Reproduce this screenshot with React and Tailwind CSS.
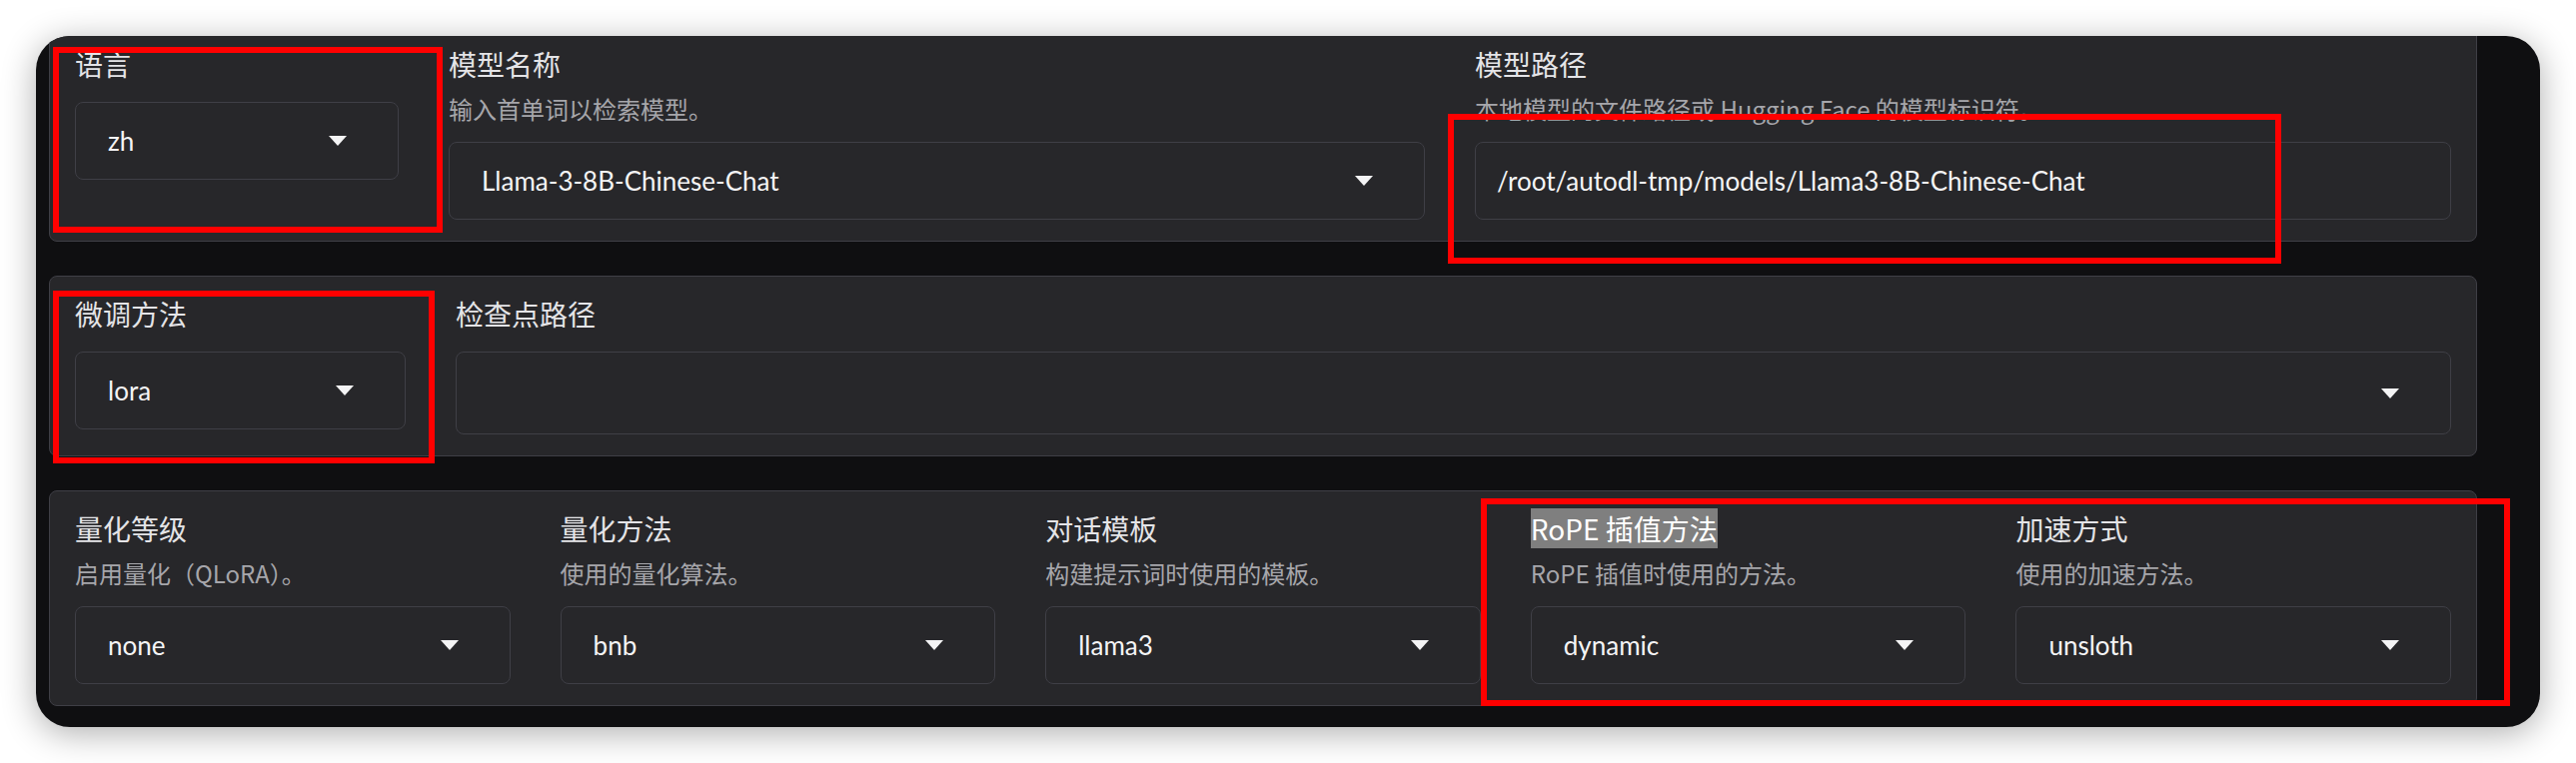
import React from "react";

function Arrow() {
  return (
    <svg width="18" height="10" viewBox="0 0 18 10" className="shrink-0">
      <path d="M0 0 H18 L9 10 Z" fill="#f4f4f5" />
    </svg>
  );
}

const valueFont = { fontFamily: 'Lato, "Noto Sans CJK SC", sans-serif' };

function Select({ value, tall = false }) {
  return (
    <div
      className={
        "flex items-center justify-between rounded-[8px] border border-[#3f3f46] bg-[#27272a] pl-[32px] pr-[51px] " +
        (tall ? "h-[83px]" : "h-[78px]")
      }
    >
      <span className="text-[26px] leading-[36px] text-[#f4f4f5] whitespace-nowrap" style={valueFont}>
        {value}
      </span>
      <Arrow />
    </div>
  );
}

function TextBox({ value }) {
  return (
    <div className="flex h-[78px] items-center rounded-[8px] border border-[#3f3f46] bg-[#27272a] px-[21px]">
      <span className="text-[26px] leading-[36px] text-[#f4f4f5] whitespace-nowrap" style={valueFont}>
        {value}
      </span>
    </div>
  );
}

function Field({ label, info, children, highlight = false }) {
  return (
    <div className="flex min-w-0 flex-col">
      <div className="text-[28px] leading-[33px] text-[#e4e4e7] whitespace-nowrap">
        {highlight ? <span className="bg-[#7f7f7f] text-white">{label}</span> : label}
      </div>
      {info ? (
        <div className="mt-[12px] text-[24px] leading-[32px] text-[#a6a6ab] whitespace-nowrap">{info}</div>
      ) : null}
      <div className={info ? "mt-[17px]" : "mt-[21px]"}>{children}</div>
    </div>
  );
}

function Panel({ children }) {
  return (
    <div className="rounded-[8px] border border-[#3f3f46] bg-[#27272a] px-[25px] pt-[21px] pb-[21px]">
      {children}
    </div>
  );
}

function RedBox({ className }) {
  return <div className={"pointer-events-none absolute border-[6px] border-[#ff0000] " + className} />;
}

export default function App() {
  return (
    <div
      className="relative h-[764px] w-[2578px] overflow-hidden bg-white pt-[36px]"
      style={{ fontFamily: '"Noto Sans CJK SC", "Noto Sans", sans-serif' }}
    >
      <div className="ml-[36px] flex h-[692px] w-[2506px] flex-col gap-[34px] overflow-hidden rounded-[34px] bg-[#0f0f11] pl-[13px] pr-[63px] shadow-[0_6px_34px_rgba(0,0,0,0.32)]">
        <div className="-mt-[10px]">
          <Panel>
            <div className="flex items-start gap-[50px]">
              <div className="w-[324px] shrink-0">
                <Field label="语言">
                  <Select value="zh" />
                </Field>
              </div>
              <div className="min-w-0 flex-1">
                <Field label="模型名称" info="输入首单词以检索模型。">
                  <Select value="Llama-3-8B-Chinese-Chat" />
                </Field>
              </div>
              <div className="min-w-0 flex-1">
                <Field label="模型路径" info="本地模型的文件路径或 Hugging Face 的模型标识符。">
                  <TextBox value="/root/autodl-tmp/models/Llama3-8B-Chinese-Chat" />
                </Field>
              </div>
            </div>
          </Panel>
        </div>

        <Panel>
          <div className="flex items-start gap-[50px]">
            <div className="w-[331px] shrink-0">
              <Field label="微调方法">
                <Select value="lora" />
              </Field>
            </div>
            <div className="min-w-0 flex-1">
              <Field label="检查点路径">
                <Select value="" tall />
              </Field>
            </div>
          </div>
        </Panel>

        <Panel>
          <div className="grid grid-cols-5 gap-x-[50px]">
            <Field label="量化等级" info="启用量化（QLoRA）。">
              <Select value="none" />
            </Field>
            <Field label="量化方法" info="使用的量化算法。">
              <Select value="bnb" />
            </Field>
            <Field label="对话模板" info="构建提示词时使用的模板。">
              <Select value="llama3" />
            </Field>
            <Field label="RoPE 插值方法" info="RoPE 插值时使用的方法。" highlight>
              <Select value="dynamic" />
            </Field>
            <Field label="加速方式" info="使用的加速方法。">
              <Select value="unsloth" />
            </Field>
          </div>
        </Panel>
      </div>

      <RedBox className="left-[53px] top-[47px] h-[186px] w-[390px]" />
      <RedBox className="left-[1449px] top-[114px] h-[150px] w-[834px]" />
      <RedBox className="left-[53px] top-[291px] h-[173px] w-[382px]" />
      <RedBox className="left-[1482px] top-[499px] h-[208px] w-[1030px]" />
    </div>
  );
}
